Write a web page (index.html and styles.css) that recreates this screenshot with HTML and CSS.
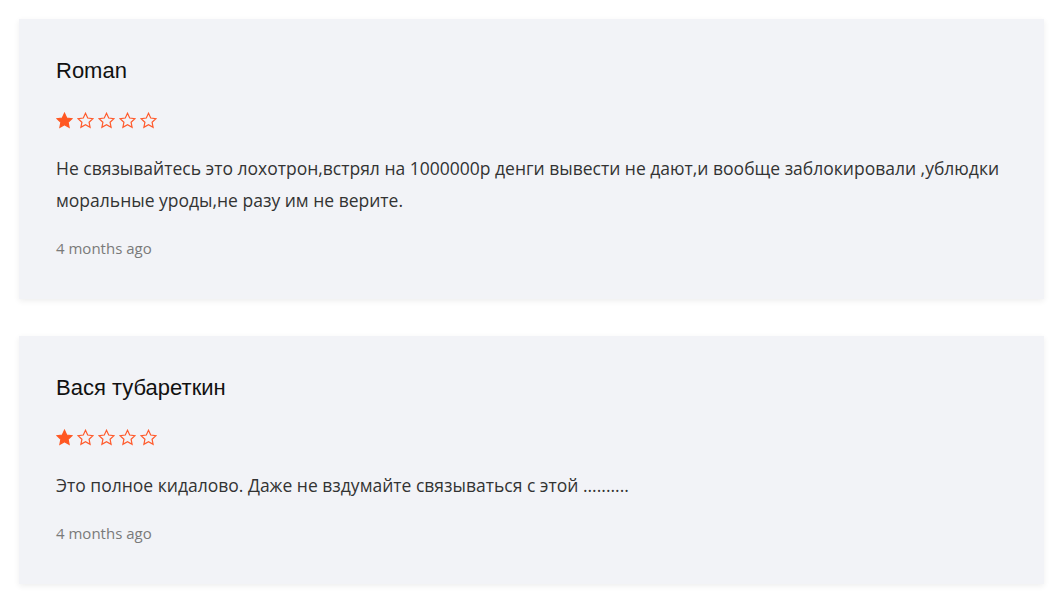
FILE: index.html
```html
<!DOCTYPE html>
<html lang="ru">
<head>
  <meta charset="UTF-8">
  <title>Отзывы</title>
  <link rel="stylesheet" href="styles.css">
</head>
<body>
  <svg width="0" height="0" class="defs">
    <defs>
      <path id="star" d="M10 1.5l2.6 5.6 6.1.7-4.5 4.2 1.2 6-5.4-3-5.4 3 1.2-6-4.5-4.2 6.1-.7z"/>
    </defs>
  </svg>

  <div class="review">
    <h3 class="review-name">Roman</h3>
    <div class="stars">
      <svg class="star full" viewBox="0 0 20 20"><use href="#star"/></svg>
      <svg class="star" viewBox="0 0 20 20"><use href="#star"/></svg>
      <svg class="star" viewBox="0 0 20 20"><use href="#star"/></svg>
      <svg class="star" viewBox="0 0 20 20"><use href="#star"/></svg>
      <svg class="star" viewBox="0 0 20 20"><use href="#star"/></svg>
    </div>
    <p class="review-text">Не связывайтесь это лохотрон,встрял на 1000000р денги вывести не дают,и вообще заблокировали ,ублюдки моральные уроды,не разу им не верите.</p>
    <div class="review-date">4 months ago</div>
  </div>

  <div class="review">
    <h3 class="review-name">Вася тубареткин</h3>
    <div class="stars">
      <svg class="star full" viewBox="0 0 20 20"><use href="#star"/></svg>
      <svg class="star" viewBox="0 0 20 20"><use href="#star"/></svg>
      <svg class="star" viewBox="0 0 20 20"><use href="#star"/></svg>
      <svg class="star" viewBox="0 0 20 20"><use href="#star"/></svg>
      <svg class="star" viewBox="0 0 20 20"><use href="#star"/></svg>
    </div>
    <p class="review-text">Это полное кидалово. Даже не вздумайте связываться с этой ..........</p>
    <div class="review-date">4 months ago</div>
  </div>
</body>
</html>
```

FILE: styles.css
```css
body {
  background-color: #fff;
  font-family: "Open Sans", sans-serif;
  margin: 0;
  padding: 19px 18px 0 19px;
}
.defs {
  position: absolute;
}
.review {
  background: #f2f3f7;
  padding: 38px 37px 39px;
  margin-bottom: 37px;
  box-shadow: 0 2px 6px rgba(0,0,0,0.07);
}
.review-name {
  font-family: "Liberation Sans", Arial, sans-serif;
  font-weight: normal;
  font-size: 22px;
  line-height: 28px;
  color: #111;
  margin: 0;
}
.stars {
  display: flex;
  gap: 4px;
  height: 20px;
  align-items: center;
  margin-top: 25px;
}
.star {
  width: 17px;
  height: 17px;
  fill: none;
  stroke: #ff5a2c;
  stroke-width: 1.4;
  stroke-linejoin: miter;
}
.star.full {
  fill: #ff5722;
  stroke: #ff5722;
}
.review-text {
  font-size: 17.5px;
  line-height: 32px;
  color: #333;
  margin: 22px 0 0;
}
.review-date {
  font-size: 15px;
  line-height: 24px;
  color: #7a7a7a;
  margin-top: 20px;
}
```
